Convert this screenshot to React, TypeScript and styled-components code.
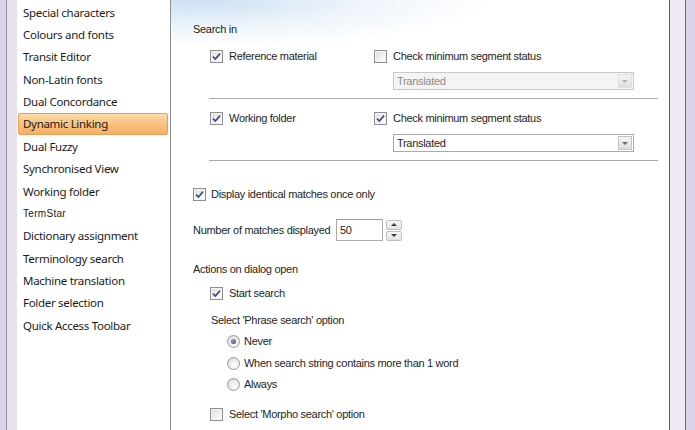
import React from 'react';
import styled, { createGlobalStyle } from 'styled-components';

const Global = createGlobalStyle`
  html, body { margin: 0; padding: 0; }
  body { width: 695px; height: 430px; overflow: hidden; background: #dcd3e8; }
`;

const Window = styled.div`
  display: flex;
  width: 695px;
  height: 430px;
`;

const FrameOuter = styled.div<{ $w: number; $line: string }>`
  width: ${p => p.$w}px;
  flex: none;
  background: #dbd2e8;
  border-right: 1px solid ${p => p.$line};
`;

const FramePane = styled.div<{ $w: number; $bg: string; $line?: string }>`
  width: ${p => p.$w}px;
  flex: none;
  background: ${p => p.$bg};
  ${p => (p.$line ? `border-right: 1px solid ${p.$line};` : '')}
`;

const Sidebar = styled.ul`
  list-style: none;
  margin: 0;
  padding: 1px 2px 0 1px;
  width: 150px;
  flex: none;
  background: #fff;
  border-right: 1px solid #8f8f8f;
  font-family: 'Noto Sans', 'Open Sans', sans-serif;
  font-size: 11.5px;
  color: #1b1b1b;
`;

const NavItem = styled.li<{ $active?: boolean; $small?: boolean }>`
  height: 22.36px;
  box-sizing: border-box;
  display: flex;
  align-items: center;
  padding-left: 5px;
  white-space: nowrap;
  letter-spacing: -0.3px;
  ${p => (p.$small ? `font-family: 'Liberation Sans', sans-serif; font-size: 10px; letter-spacing: 0.3px;` : '')}
  ${p =>
    p.$active
      ? `background: linear-gradient(#fcdcaa, #f8c07c 55%, #f6b064);
         border: 1px solid #e5a15a;
         border-radius: 2px;
         padding-left: 4px;`
      : ''}
`;

const Content = styled.div`
  width: 499px;
  flex: none;
  box-sizing: border-box;
  border-right: 1px solid #5c5c5c;
  background:
    radial-gradient(ellipse 300px 48px at 20px 0px, rgba(200, 222, 242, 0.95), rgba(222, 235, 247, 0.55) 55%, rgba(255, 255, 255, 0) 100%),
    #fff;
  padding-left: 22px;
  display: flex;
  flex-direction: column;
  font-family: 'Liberation Sans', Arial, sans-serif;
  font-size: 11px;
  color: #1e1e1e;
  letter-spacing: -0.3px;
`;

const Label = styled.div<{ $mt: number; $indent?: number }>`
  height: 14px;
  line-height: 14px;
  margin-top: ${p => p.$mt}px;
  margin-left: ${p => p.$indent ?? 0}px;
  white-space: nowrap;
`;

const Row = styled.div<{ $mt: number; $indent?: number; $h?: number }>`
  display: flex;
  align-items: center;
  height: ${p => p.$h ?? 14}px;
  margin-top: ${p => p.$mt}px;
  margin-left: ${p => p.$indent ?? 0}px;
`;

const Pair = styled.div`
  display: grid;
  grid-template-columns: 164px 1fr;
  align-items: center;
`;

const Option = styled.label<{ $gap?: number }>`
  display: flex;
  align-items: center;
  gap: ${p => p.$gap ?? 6}px;
  white-space: nowrap;
`;

const Box = styled.span`
  width: 13px;
  height: 13px;
  box-sizing: border-box;
  flex: none;
  border: 1px solid #8e8f8f;
  background: linear-gradient(135deg, #dcdcdc, #f6f6f6 70%, #ffffff);
  box-shadow: inset 0 0 0 1px #f4f4f4;
  display: flex;
  align-items: center;
  justify-content: center;
`;

const RadioDot = styled.span<{ $on?: boolean }>`
  width: 13px;
  height: 13px;
  box-sizing: border-box;
  flex: none;
  border-radius: 50%;
  border: 1px solid #9a9a9a;
  background: radial-gradient(circle at 60% 65%, #ffffff, #e6e6e6 60%, #d2d2d2);
  display: flex;
  align-items: center;
  justify-content: center;
  &::after {
    content: '';
    width: 5px;
    height: 5px;
    border-radius: 50%;
    background: ${p => (p.$on ? 'radial-gradient(circle at 40% 35%, #8da2c9, #2c3f6c)' : 'transparent')};
  }
`;

const Select = styled.div<{ $disabled?: boolean }>`
  width: 241px;
  height: 18px;
  box-sizing: border-box;
  margin-top: 9px;
  margin-left: 200px;
  border: 1px solid ${p => (p.$disabled ? '#c8c8c8' : '#a9a9a9')};
  background: ${p => (p.$disabled ? '#f4f4f4' : '#fff')};
  color: ${p => (p.$disabled ? '#8c8c8c' : '#1e1e1e')};
  display: flex;
  align-items: center;
  padding-left: 3px;
`;

const SelectArrow = styled.span<{ $disabled?: boolean }>`
  margin-left: auto;
  margin-right: 1px;
  width: 14px;
  height: 14px;
  box-sizing: border-box;
  border: 1px solid ${p => (p.$disabled ? '#e0e0e0' : '#c4c4c4')};
  background: linear-gradient(#f5f5f5, #dedede);
  display: flex;
  align-items: center;
  justify-content: center;
  &::after {
    content: '';
    border-left: 3px solid transparent;
    border-right: 3px solid transparent;
    border-top: 3px solid ${p => (p.$disabled ? '#b0b0b0' : '#6b6b6b')};
  }
`;

const Separator = styled.div<{ $mt: number }>`
  height: 1px;
  margin-top: ${p => p.$mt}px;
  margin-left: 16px;
  width: 449px;
  background: #a8a8a8;
`;

const NumLabel = styled.div`
  width: 139px;
  overflow: hidden;
  white-space: nowrap;
  flex: none;
`;

const NumInput = styled.div`
  width: 47px;
  height: 22px;
  box-sizing: border-box;
  border: 1px solid #ababab;
  border-top-color: #9c9c9c;
  margin-left: 4px;
  padding-left: 3px;
  display: flex;
  align-items: center;
`;

const Spinner = styled.div`
  margin-left: 3px;
  display: flex;
  flex-direction: column;
  gap: 1px;
`;

const SpinBtn = styled.span<{ $up?: boolean }>`
  width: 16px;
  height: 10px;
  box-sizing: border-box;
  border: 1px solid #bdbdbd;
  border-radius: 2px;
  background: linear-gradient(#f8f8f8, #e2e2e2);
  display: flex;
  align-items: center;
  justify-content: center;
  &::after {
    content: '';
    border-left: 3px solid transparent;
    border-right: 3px solid transparent;
    ${p => (p.$up ? 'border-bottom: 3px solid #3a3a3a;' : 'border-top: 3px solid #3a3a3a;')}
  }
`;

const Check = () => (
  <svg width="9" height="9" viewBox="0 0 9 9">
    <path d="M1 4.6 L3.4 7 L8 1.6" fill="none" stroke="#3d4f7e" strokeWidth="1.7" />
  </svg>
);

const CheckBox = ({ checked, gap, children }: { checked?: boolean; gap?: number; children: React.ReactNode }) => (
  <Option $gap={gap}>
    <Box>{checked ? <Check /> : null}</Box>
    <span>{children}</span>
  </Option>
);

const Radio = ({ on, children }: { on?: boolean; children: React.ReactNode }) => (
  <Option $gap={4}>
    <RadioDot $on={on} />
    <span>{children}</span>
  </Option>
);

const navItems = [
  'Special characters',
  'Colours and fonts',
  'Transit Editor',
  'Non-Latin fonts',
  'Dual Concordance',
  'Dynamic Linking',
  'Dual Fuzzy',
  'Synchronised View',
  'Working folder',
  'TermStar',
  'Dictionary assignment',
  'Terminology search',
  'Machine translation',
  'Folder selection',
  'Quick Access Toolbar',
];

export default function App() {
  return (
    <>
      <Global />
      <Window>
        <FrameOuter $w={6} $line="#948aa9" />
        <FramePane $w={10} $bg="#e5e4ef" />
        <Sidebar>
          {navItems.map(n => (
            <NavItem key={n} $active={n === 'Dynamic Linking'} $small={n === 'TermStar'}>
              {n}
            </NavItem>
          ))}
        </Sidebar>
        <Content>
          <Label $mt={22}>Search in</Label>

          <Row $mt={13} $indent={17}>
            <Pair>
              <CheckBox checked>Reference material</CheckBox>
              <CheckBox>Check minimum segment status</CheckBox>
            </Pair>
          </Row>
          <Select $disabled>
            Translated
            <SelectArrow $disabled />
          </Select>
          <Separator $mt={8} />

          <Row $mt={12} $indent={17}>
            <Pair>
              <CheckBox checked>Working folder</CheckBox>
              <CheckBox checked>Check minimum segment status</CheckBox>
            </Pair>
          </Row>
          <Select>
            Translated
            <SelectArrow />
          </Select>
          <Separator $mt={8} />

          <Row $mt={26}>
            <CheckBox checked gap={5}>Display identical matches once only</CheckBox>
          </Row>

          <Row $mt={18} $h={22}>
            <NumLabel>Number of matches displayed</NumLabel>
            <NumInput>50</NumInput>
            <Spinner>
              <SpinBtn $up />
              <SpinBtn />
            </Spinner>
          </Row>

          <Label $mt={21}>Actions on dialog open</Label>
          <Row $mt={10} $indent={17}>
            <CheckBox checked>Start search</CheckBox>
          </Row>
          <Label $mt={13} $indent={18}>Select 'Phrase search' option</Label>
          <Row $mt={7} $indent={34}>
            <Radio on>Never</Radio>
          </Row>
          <Row $mt={8} $indent={34}>
            <Radio>When search string contains more than 1 word</Radio>
          </Row>
          <Row $mt={7} $indent={34}>
            <Radio>Always</Radio>
          </Row>
          <Row $mt={16} $indent={17}>
            <CheckBox>Select 'Morpho search' option</CheckBox>
          </Row>
        </Content>
        <FramePane $w={15} $bg="#efe9f4" $line="#6a6a6a" />
        <FrameOuter $w={8} $line="transparent" />
      </Window>
    </>
  );
}
